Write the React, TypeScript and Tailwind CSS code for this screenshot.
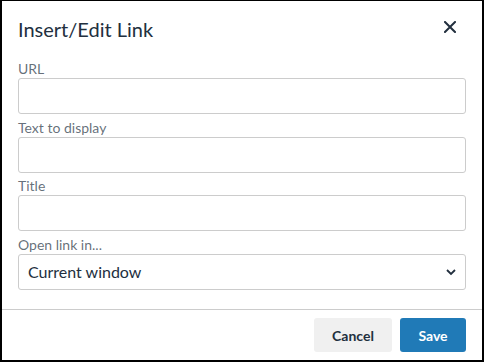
import React from 'react'

const font = { fontFamily: '"Lato", "Open Sans", "Liberation Sans", sans-serif' }

function Field({ label, children }: { label: string; children: React.ReactNode }) {
  return (
    <div className="flex flex-col">
      <label className="text-[14px] leading-[19px] text-[#222f3e]/70">{label}</label>
      {children}
    </div>
  )
}

function TextInput() {
  return <input type="text" className="h-[36px] w-full rounded-[3px] border border-[#cccccc] bg-white px-2 text-[16px] text-[#222f3e] outline-none" />
}

export default function App() {
  return (
    <div style={font} className="box-border flex h-[362px] w-[484px] flex-col border-t border-r-2 border-b-2 border-l-2 border-black bg-white text-[#222f3e]">
      <div className="flex items-start justify-between pt-[15px] pr-[26px] pl-4">
        <h1 className="text-[20px] leading-[26px] font-normal">Insert/Edit Link</h1>
        <button className="mt-[5px] flex h-[12px] w-[12px] items-center justify-center" aria-label="Close">
          <svg width="12" height="12" viewBox="0 0 12 12">
            <path d="M1 1 L11 11 M11 1 L1 11" stroke="#222f3e" strokeWidth="2" strokeLinecap="square" />
          </svg>
        </button>
      </div>

      <div className="mt-[17px] flex flex-1 flex-col gap-[3.5px] px-4">
        <Field label="URL"><TextInput /></Field>
        <Field label="Text to display"><TextInput /></Field>
        <Field label="Title"><TextInput /></Field>
        <Field label="Open link in...">
          <div className="relative flex h-[36px] w-full items-center rounded-[3px] border border-[#cccccc] bg-white pl-[9px]">
            <span className="text-[16px] text-[#222f3e]">Current window</span>
            <svg className="absolute top-[14px] right-[9px]" width="10" height="7" viewBox="0 0 10 7">
              <path d="M1 1 L5 5 L9 1" fill="none" stroke="#222f3e" strokeWidth="1.8" />
            </svg>
          </div>
        </Field>
      </div>

      <div className="flex justify-end gap-2 border-t border-[#cccccc] px-4 py-2">
        <button className="h-[34px] w-[78px] rounded-[3px] bg-[#f0f0f0] text-[14px] font-bold text-[#222f3e]">Cancel</button>
        <button className="h-[34px] w-[66px] rounded-[3px] bg-[#207ab7] text-[14px] font-bold text-white">Save</button>
      </div>
    </div>
  )
}
